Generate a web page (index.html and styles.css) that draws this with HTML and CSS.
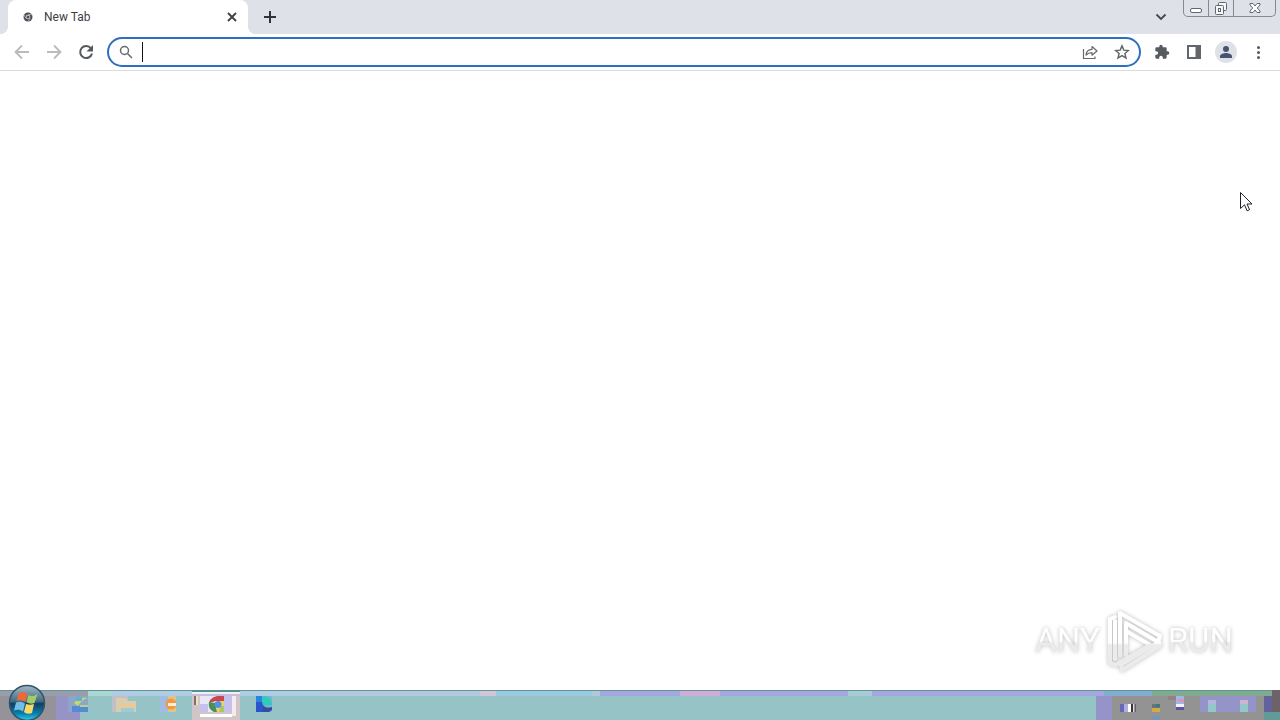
FILE: index.html
```html
<!DOCTYPE html>
<html lang="en">
<head>
    <meta charset="UTF-8">
    <meta name="viewport" content="width=device-width, initial-scale=1.0">
    <title>New Tab</title>
    <link rel="stylesheet" href="styles.css">
</head>
<body>

    <header class="tab-strip">
        <div class="tab">
            <svg class="favicon" viewBox="0 0 10 10" width="10" height="10">
                <circle cx="5" cy="5" r="4.5" fill="#4d5054"/>
                <path d="M5 2.6H9.3M2.9 6.2.8 2.7M7.1 6.2 5 9.7" stroke="#c9cbce" stroke-width=".7"/>
                <circle cx="5" cy="5" r="2.3" fill="#d9dbde"/>
                <circle cx="5" cy="5" r="1.5" fill="#4d5054"/>
            </svg>
            <span class="tab-title">New Tab</span>
            <button class="tab-close" aria-label="Close tab">
                <svg viewBox="0 0 16 16" width="16" height="16"><path d="M4 4l8 8M12 4l-8 8" stroke="#3c4043" stroke-width="1.8"/></svg>
            </button>
        </div>
        <button class="new-tab" aria-label="New tab">
            <svg viewBox="0 0 28 28" width="28" height="28"><path d="M14 8v12M8 14h12" stroke="#303338" stroke-width="2"/></svg>
        </button>
        <button class="tab-search" aria-label="Search tabs">
            <svg viewBox="0 0 16 16" width="16" height="16"><path d="M3.500 5.500 8 10l4.500-4.500" fill="none" stroke="#45484d" stroke-width="1.8"/></svg>
        </button>
        <div class="window-controls">
            <button class="minimize" aria-label="Minimize">
                <svg viewBox="0 0 16 16" width="16" height="16"><rect x="2.500" y="8.500" width="11" height="4" rx="1.500" fill="#fff" stroke="#62666e"/></svg>
            </button>
            <button class="restore" aria-label="Restore">
                <svg viewBox="0 0 16 16" width="16" height="16" fill="#f5f6f8" stroke="#62666e"><rect x="5.500" y="2.500" width="8" height="8" rx="1"/><rect x="2.500" y="5.500" width="8" height="9" rx="1"/><rect x="5.500" y="8.500" width="2" height="3"/></svg>
            </button>
            <button class="close" aria-label="Close">
                <svg viewBox="0 0 16 16" width="16" height="16"><path d="M3 3.500h3l2 2.500 2-2.500h3v1.500L10.300 8l2.700 3v1.500h-3L8 10l-2 2.500H3V11l2.700-3L3 5z" fill="#fff" stroke="#62666e"/></svg>
            </button>
        </div>
    </header>

    <nav class="toolbar">
        <button class="tool" aria-label="Back">
            <svg viewBox="0 0 16 16" width="16" height="16" fill="none" stroke="#b9bbbe" stroke-width="1.800"><path d="M15 8H2M8 1.500 1.500 8 8 14.500"/></svg>
        </button>
        <button class="tool" aria-label="Forward">
            <svg viewBox="0 0 16 16" width="16" height="16" fill="none" stroke="#b9bbbe" stroke-width="1.800"><path d="M1 8h13M8 1.500 14.500 8 8 14.500"/></svg>
        </button>
        <button class="tool" aria-label="Reload">
            <svg viewBox="0 0 16 16" width="16" height="16"><path d="M13 4.500A6 6 0 1 0 14 9.500" fill="none" stroke="#55585c" stroke-width="2"/><path d="M15 1v6.500H8.500z" fill="#55585c"/></svg>
        </button>
        <form class="omnibox">
            <svg viewBox="0 0 16 16" width="16" height="16" fill="none" stroke="#66696d" stroke-width="1.500"><circle cx="6.500" cy="6.500" r="4"/><path d="M9.500 9.500 14 14"/></svg>
            <span class="caret"></span>
            <input type="text" class="address" aria-label="Address and search bar">
            <button type="button" class="omni-action" aria-label="Share this page">
                <svg viewBox="0 0 16 16" width="16" height="16" fill="none" stroke="#66696d" stroke-width="1.200"><path d="M1.500 5v9.500H13V12.500"/><path d="M4 11c.3-4 2.500-5.600 6-5.700V2.500L15 7l-5 4.200V8.600c-2.700 0-4.500.7-6 2.400z" stroke-linejoin="round"/></svg>
            </button>
            <button type="button" class="omni-action" aria-label="Bookmark this tab">
                <svg viewBox="0 0 16 16" width="16" height="16" fill="none" stroke="#5f6266" stroke-width="1.400"><path d="M8 1.900l1.800 4.200 4.600.4-3.500 3 1.100 4.500L8 11.600 4 14l1.100-4.500-3.500-3 4.600-.4z"/></svg>
            </button>
        </form>
        <button class="tool" aria-label="Extensions">
            <svg viewBox="0 0 24 24" width="16" height="16"><path d="M20.500 11H19V7a2 2 0 0 0-2-2h-4V3.500a2.500 2.500 0 0 0-5 0V5H4a2 2 0 0 0-2 2v3.800h1.500a2.700 2.700 0 0 1 0 5.400H2V20a2 2 0 0 0 2 2h3.800v-1.500a2.700 2.700 0 0 1 5.400 0V22H17a2 2 0 0 0 2-2v-4h1.500a2.500 2.500 0 0 0 0-5z" fill="#56595e"/></svg>
        </button>
        <button class="tool" aria-label="Side panel">
            <svg viewBox="0 0 16 16" width="16" height="16"><path d="M2 2h12v12H2z" fill="none" stroke="#63666b" stroke-width="2"/><path d="M9.500 2H14v12H9.500z" fill="#63666b"/></svg>
        </button>
        <button class="tool" aria-label="Profile">
            <svg viewBox="0 0 22 22" width="22" height="22"><circle cx="11" cy="11" r="11" fill="#dee2e8"/><circle cx="11" cy="8" r="3" fill="#485374"/><path d="M5 17v-1.800c0-2.200 4-3.200 6-3.200s6 1 6 3.200V17z" fill="#485374"/></svg>
        </button>
        <button class="tool" aria-label="Menu">
            <svg viewBox="0 0 16 16" width="16" height="16" fill="#55585c"><circle cx="8.500" cy="3.500" r="1.500"/><circle cx="8.500" cy="8.500" r="1.500"/><circle cx="8.500" cy="13.500" r="1.500"/></svg>
        </button>
    </nav>

    <main class="page">
        <div class="watermark">
            <span>ANY</span>
            <svg viewBox="0 0 60 64" width="60" height="64">
                <defs>
                    <linearGradient id="fade" x1="0" y1="0" x2="0" y2="64" gradientUnits="userSpaceOnUse"><stop offset=".53" stop-color="#fff"/><stop offset=".56" stop-color="#ebebeb"/></linearGradient>
                </defs>
                <g fill="none" stroke="url(#fade)" stroke-width="4" stroke-linejoin="round" stroke-linecap="round">
                    <path d="M11 8 6 10v44l6 2 4-3"/>
                    <path d="M11 12v38"/>
                    <path d="M16 46V4l40 23-2 6L22 14v32"/>
                    <path d="M22 22l24 14-31 18"/>
                    <path d="M55 33 17 56l1 5L56 37z"/>
                </g>
            </svg>
            <span>RUN</span>
        </div>
        <svg class="cursor" viewBox="0 0 13 20" width="13" height="20"><path d="M.5.500v16l4-3.700 2.600 6 2.500-1.100L7 12h5z" fill="#fff" stroke="#20222c"/></svg>
    </main>

    <footer class="taskbar">
        <button class="start" aria-label="Start">
            <svg viewBox="0 0 38 38" width="38" height="38">
                <defs>
                    <linearGradient id="orb" x1="0" y1="0" x2="0" y2="1"><stop offset="0" stop-color="#a3bac5"/><stop offset=".45" stop-color="#416d85"/><stop offset=".52" stop-color="#103e62"/><stop offset=".8" stop-color="#087fae"/><stop offset="1" stop-color="#2bd0ed"/></linearGradient>
                </defs>
                <circle cx="19" cy="19" r="17.500" fill="url(#orb)" stroke="#315468" stroke-width="1.500"/>
                <path d="M11 9c3-2 6-1 8.500 1l-2 8c-3-2-6-2-9-1z" fill="#ed693a"/>
                <path d="M20.500 11c3 2 6 1 9-1l-3 9c-3 1-5 1-8-1z" fill="#a2cd66"/>
                <path d="M8 18.500c3-1 6-1 9 1l-2 8c-3-2-6-2-9-1z" fill="#71bfe5"/>
                <path d="M18 20c3 1 5 1 8 0l-2 9c-3 1-6 1-8-1z" fill="#f8d967"/>
            </svg>
        </button>
        <button class="task" aria-label="Internet Explorer">
            <svg viewBox="0 0 48 30" width="48" height="30"><path d="M20 6h20v16H20z" fill="#8ca5c8"/><path d="M24 16h8v6h-8zM32 17h8v5h-8z" fill="#568ad2"/><path d="M26 13c3-5 8-6 14-5-4 1-8 4-10 8z" fill="#c6d963"/><path d="M32 15h8v2h-8z" fill="#b6cf92"/><path d="M28 7h6v4h-6z" fill="#63afdc"/></svg>
        </button>
        <button class="task" aria-label="Windows Explorer">
            <svg viewBox="0 0 48 30" width="48" height="30"><path d="M16 6h16v16H16z" fill="#c0bfc8"/><path d="M20 8h10l2 3h8v11H20z" fill="#dacdae"/><path d="M24 14h15v4H24z" fill="#e8ca99"/><path d="M25 18h13v4H25z" fill="#9dcbd7"/></svg>
        </button>
        <button class="task" aria-label="Media Player">
            <svg viewBox="0 0 48 30" width="48" height="30"><path d="M16 6h10v16H16z" fill="#9fbce3"/><path d="M24 6h8v16h-8z" fill="#dec48c"/><circle cx="27" cy="14" r="5.500" fill="#f29a3f"/><path d="M24 13h8v3h-8z" fill="#f8eee0"/></svg>
        </button>
        <button class="task active" aria-label="Google Chrome">
            <svg viewBox="0 0 48 30" width="48" height="30"><path d="M8 6h32v16H8z" fill="#e8e7f5"/><path d="M8 14h8v8H8zM32 6h8v16h-8z" fill="#c4c1ee"/><path d="M8 24h32v3H8z" fill="#fff"/><path d="M2 6h2v9H2z" fill="#7b706d"/><path d="M4 6h2v9H4z" fill="#f2dfbd"/><path d="M17 13c1-4 4-6 8-7h7v5h-8z" fill="#c9474f"/><path d="M17 12l6 1 2 9h-3c-4-2-6-5-5-10z" fill="#4b8f55"/><path d="M25 11h7v11h-7z" fill="#ead266"/><path d="M29 16h3v6h-5z" fill="#a9c765"/><circle cx="26" cy="14.500" r="3.500" fill="#5293db"/><path d="M40 6h4v20h-4z" fill="#f3ecea"/></svg>
        </button>
        <button class="task" aria-label="Microsoft Edge">
            <svg viewBox="0 0 48 30" width="48" height="30"><path d="M16 6h16v16H16z" fill="#7bb6cf"/><path d="M16 12c1-5 5-6 8-6 5 0 8 4 8 9l-8 1z" fill="#2fcbbb"/><path d="M16 6h6v5l-2 5h-4z" fill="#2d84dc"/><path d="M16 12h6l3 10h-9z" fill="#2c55cb"/><path d="M23 15c2 3 5 3 9 2v3l-3 2h-6z" fill="#384b9f"/></svg>
        </button>
        <div class="tray">
            <svg viewBox="0 0 184 30" width="184" height="30">
                <path d="M24 14h8v8h-8z" fill="#6569b4"/><path d="M28 14h4v8h-4z" fill="#b0addf"/><path d="M32 14h3v8h-3z" fill="#fff"/><path d="M35 14h2v8h-2z" fill="#393536"/><path d="M37 14h1v8h-1z" fill="#e3dbc8"/><path d="M39 14h1v8h-1z" fill="#5f6083"/>
                <path d="M56 14h8v4h-8z" fill="#687477"/><path d="M56 18h8v4h-8z" fill="#d2ab46"/><path d="M60 14h4v3h-4z" fill="#387b81"/><path d="M56 26h8v4h-8z" fill="#7696b5"/>
                <path d="M72 6h8v4h-8z" fill="#997f81"/><path d="M80 6h8v8h-8z" fill="#9cb8e6"/><path d="M82 9h6v3h-6z" fill="#df93b0"/><path d="M80 14h8v3h-8z" fill="#f2f0fa"/><path d="M80 17h8v3h-8z" fill="#6253a0"/>
                <path d="M104 6h56v16h-56z" fill="#9594c8"/><path d="M112 10h8v4h-8z" fill="#b2b7df"/><path d="M112 14h8v8h-8z" fill="#91c9ca"/><path d="M144 10h8v4h-8z" fill="#d0b3d2"/><path d="M144 14h8v8h-8z" fill="#91c9ca"/>
                <path d="M168 6h8v16h-8z" fill="#64629b"/><path d="M176 0h8v22h-8z" fill="#6c6268"/><path d="M168 22h16v8h-16z" fill="#619b98"/>
            </svg>
        </div>
    </footer>

</body>
</html>
```
FILE: styles.css
```css
* {
    box-sizing: border-box;
}

body {
    margin: 0;
    min-height: 100vh;
    display: flex;
    flex-direction: column;
    background: white;
    font-family: Roboto, "Noto Sans", sans-serif;
    font-size: 12px;
    color: #3c4043;
}

button {
    display: flex;
    align-items: center;
    justify-content: center;
    padding: 0;
    border: none;
    background: none;
}

svg {
    display: block;
    flex-shrink: 0;
}

/* Tabs */
.tab-strip {
    display: flex;
    height: 34px;
    padding: 0 4px 0 8px;
    background: #dee1e8;
}

.tab {
    position: relative;
    display: flex;
    align-items: center;
    width: 240px;
    padding: 0 8px 0 15px;
    border-radius: 8px 8px 0 0;
    background: white;
}

.tab::before,
.tab::after {
    content: "";
    position: absolute;
    bottom: 0;
    width: 8px;
    height: 8px;
}

.tab::before {
    right: 100%;
    background: radial-gradient(circle at 0 0, transparent 8px, white 8px);
}

.tab::after {
    left: 100%;
    background: radial-gradient(circle at 100% 0, transparent 8px, white 8px);
}

.tab-title {
    flex: 1;
    margin-left: 11px;
    line-height: 16px;
}

.new-tab {
    width: 28px;
    margin-left: 8px;
}

.tab-search {
    width: 16px;
    margin: 0 14px 0 auto;
}

.window-controls {
    display: flex;
    height: 17px;
    border: 1px solid #858991;
    border-top: none;
    border-radius: 0 0 5px 5px;
}

.window-controls button {
    width: 25px;
}

.window-controls button + button {
    border-left: 1px solid #858991;
}

.window-controls .minimize {
    width: 24px;
}

.window-controls .close {
    width: 42px;
}

/* Toolbar */
.toolbar {
    display: flex;
    align-items: center;
    height: 37px;
    padding: 0 6px;
    border-bottom: 1px solid #dadbdd;
}

.tool {
    width: 32px;
    height: 32px;
}

.omnibox {
    display: flex;
    flex: 1;
    align-items: center;
    height: 30px;
    margin: 0 5px;
    padding: 0 9px;
    border: 2px solid #2b70c2;
    border-radius: 15px;
}

.caret {
    width: 1px;
    height: 20px;
    margin-left: 8px;
    background: #111;
}

.address {
    flex: 1;
    min-width: 0;
    padding: 0;
    border: none;
    outline: none;
    background: none;
    font: inherit;
}

.omni-action {
    width: 16px;
    margin-left: 16px;
}

/* Page */
.page {
    position: relative;
    display: flex;
    flex: 1;
    align-items: flex-end;
    justify-content: flex-end;
    padding: 0 47px 17px;
}

.watermark {
    display: flex;
    align-items: center;
    gap: 4px;
    font-size: 33px;
    line-height: 48px;
    filter: drop-shadow(0 0 2px #bbb);
}

.watermark span {
    background: linear-gradient(white 50%, #ebebeb 54%);
    background-clip: text;
    -webkit-background-clip: text;
    color: transparent;
}

.cursor {
    position: absolute;
    top: 121px;
    right: 27px;
}

/* Taskbar */
.taskbar {
    display: flex;
    height: 30px;
    padding-left: 8px;
    background:
        linear-gradient(#5f9499 0 1px, transparent 1px) 0 0 / 100% 6px no-repeat,
        linear-gradient(to right, #999da9 0 88px, #a9d8d2 88px 112px, #b0cbe4 112px 320px, #b1c8de 320px 480px, #d2c4d9 480px 496px, #9bc9df 496px 592px, #b1c8dc 592px 600px, #a5a8df 600px 680px, #d0add9 680px 720px, #a5a8df 720px 848px, #a8cbd7 848px 872px, #a5a8df 872px 1104px, #83acd0 1104px 1152px, #80aa8e 1152px) 0 0 / 100% 6px no-repeat,
        linear-gradient(to right, #96929a 0 56px, #9693c6 56px 80px, #96c4c6 80px);
}

.start {
    position: relative;
    width: 38px;
    height: 38px;
    margin: -6px 2px 0 0;
    overflow: hidden;
}

.task {
    width: 48px;
    height: 30px;
}

.task.active {
    background: linear-gradient(#578e8f 0 2px, #eff0f2 2px 4px, #c6bde0 4px 6px, #d2c5c8 6px);
}

.tray {
    margin-left: auto;
    background: linear-gradient(to right, #9593c7 0 16px, #939393 16px) 0 6px no-repeat;
}
```
